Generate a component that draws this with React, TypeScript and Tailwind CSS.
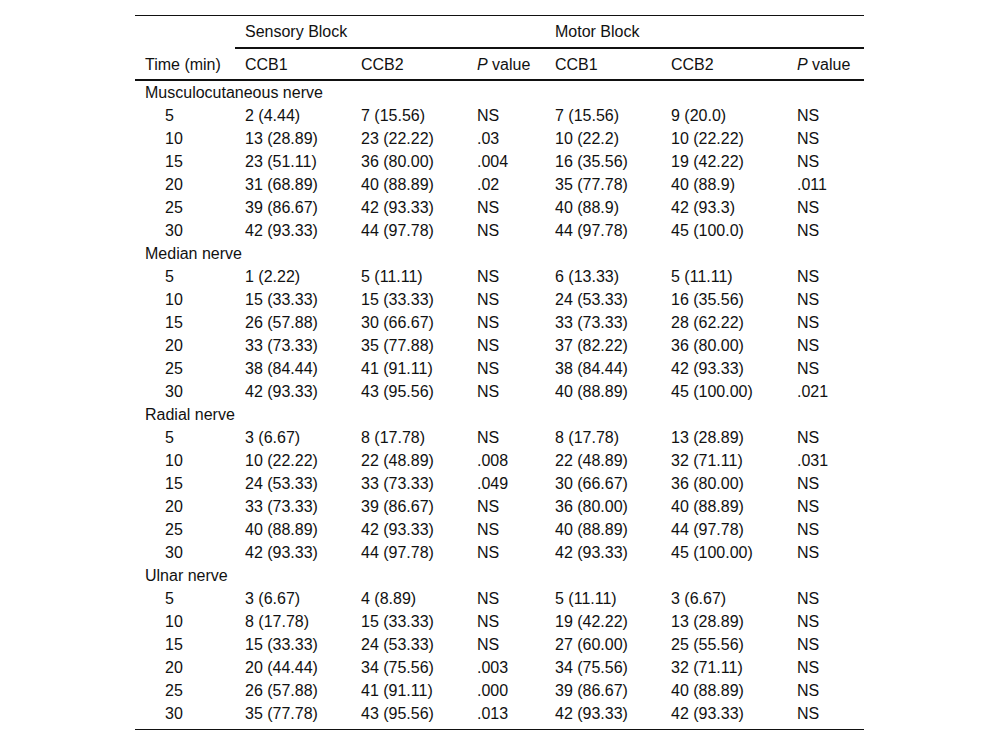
import React from "react";

type Row = [string, string, string, string, string, string, string];
const groups: { name: string; rows: Row[] }[] = [
  {
    name: "Musculocutaneous nerve",
    rows: [
      ["5", "2 (4.44)", "7 (15.56)", "NS", "7 (15.56)", "9 (20.0)", "NS"],
      ["10", "13 (28.89)", "23 (22.22)", ".03", "10 (22.2)", "10 (22.22)", "NS"],
      ["15", "23 (51.11)", "36 (80.00)", ".004", "16 (35.56)", "19 (42.22)", "NS"],
      ["20", "31 (68.89)", "40 (88.89)", ".02", "35 (77.78)", "40 (88.9)", ".011"],
      ["25", "39 (86.67)", "42 (93.33)", "NS", "40 (88.9)", "42 (93.3)", "NS"],
      ["30", "42 (93.33)", "44 (97.78)", "NS", "44 (97.78)", "45 (100.0)", "NS"],
    ],
  },
  {
    name: "Median nerve",
    rows: [
      ["5", "1 (2.22)", "5 (11.11)", "NS", "6 (13.33)", "5 (11.11)", "NS"],
      ["10", "15 (33.33)", "15 (33.33)", "NS", "24 (53.33)", "16 (35.56)", "NS"],
      ["15", "26 (57.88)", "30 (66.67)", "NS", "33 (73.33)", "28 (62.22)", "NS"],
      ["20", "33 (73.33)", "35 (77.88)", "NS", "37 (82.22)", "36 (80.00)", "NS"],
      ["25", "38 (84.44)", "41 (91.11)", "NS", "38 (84.44)", "42 (93.33)", "NS"],
      ["30", "42 (93.33)", "43 (95.56)", "NS", "40 (88.89)", "45 (100.00)", ".021"],
    ],
  },
  {
    name: "Radial nerve",
    rows: [
      ["5", "3 (6.67)", "8 (17.78)", "NS", "8 (17.78)", "13 (28.89)", "NS"],
      ["10", "10 (22.22)", "22 (48.89)", ".008", "22 (48.89)", "32 (71.11)", ".031"],
      ["15", "24 (53.33)", "33 (73.33)", ".049", "30 (66.67)", "36 (80.00)", "NS"],
      ["20", "33 (73.33)", "39 (86.67)", "NS", "36 (80.00)", "40 (88.89)", "NS"],
      ["25", "40 (88.89)", "42 (93.33)", "NS", "40 (88.89)", "44 (97.78)", "NS"],
      ["30", "42 (93.33)", "44 (97.78)", "NS", "42 (93.33)", "45 (100.00)", "NS"],
    ],
  },
  {
    name: "Ulnar nerve",
    rows: [
      ["5", "3 (6.67)", "4 (8.89)", "NS", "5 (11.11)", "3 (6.67)", "NS"],
      ["10", "8 (17.78)", "15 (33.33)", "NS", "19 (42.22)", "13 (28.89)", "NS"],
      ["15", "15 (33.33)", "24 (53.33)", "NS", "27 (60.00)", "25 (55.56)", "NS"],
      ["20", "20 (44.44)", "34 (75.56)", ".003", "34 (75.56)", "32 (71.11)", "NS"],
      ["25", "26 (57.88)", "41 (91.11)", ".000", "39 (86.67)", "40 (88.89)", "NS"],
      ["30", "35 (77.78)", "43 (95.56)", ".013", "42 (93.33)", "42 (93.33)", "NS"],
    ],
  },
];

const PVal = () => (
  <>
    <span className="italic">P</span> value
  </>
);

export default function App() {
  return (
    <div
      className="w-[1000px] h-[747px] bg-white text-[#111] text-[16px] leading-[23px] pt-[15px]"
      style={{ fontFamily: '"Liberation Sans", Arial, sans-serif' }}
    >
      <table className="ml-[135px] w-[729px] border-collapse table-fixed">
        <colgroup>
          <col className="w-[100px]" />
          <col className="w-[116px]" />
          <col className="w-[116px]" />
          <col className="w-[78px]" />
          <col className="w-[116px]" />
          <col className="w-[126px]" />
          <col className="w-[77px]" />
        </colgroup>
        <thead>
          <tr className="h-[32px] border-t border-[#111]">
            <th className="font-normal text-left pl-[10px]"></th>
            <th colSpan={3} className="font-normal text-left pl-[10px] border-b-2 border-[#111]">
              Sensory Block
            </th>
            <th colSpan={3} className="font-normal text-left pl-[10px] border-b-2 border-[#111]">
              Motor Block
            </th>
          </tr>
          <tr className="h-[32px] border-b-2 border-[#111]">
            <th className="font-normal text-left pl-[10px] pt-[2px] whitespace-nowrap">Time (min)</th>
            <th className="font-normal text-left pl-[10px] pt-[2px]">CCB1</th>
            <th className="font-normal text-left pl-[10px] pt-[2px]">CCB2</th>
            <th className="font-normal text-left pl-[10px] pt-[2px] whitespace-nowrap"><PVal /></th>
            <th className="font-normal text-left pl-[10px] pt-[2px]">CCB1</th>
            <th className="font-normal text-left pl-[10px] pt-[2px]">CCB2</th>
            <th className="font-normal text-left pl-[10px] pt-[2px] whitespace-nowrap"><PVal /></th>
          </tr>
        </thead>
        <tbody>
          <tr className="h-[1px]">
            <td colSpan={7} className="p-0 leading-[1px]"></td>
          </tr>
          {groups.map((g) => (
            <React.Fragment key={g.name}>
              <tr className="h-[23px]">
                <td colSpan={7} className="pl-[10px] whitespace-nowrap">{g.name}</td>
              </tr>
              {g.rows.map((r, i) => (
                <tr key={i} className="h-[23px]">
                  {r.map((c, j) => (
                    <td key={j} className={j === 0 ? "pl-[30px]" : "pl-[10px] whitespace-nowrap"}>
                      {c}
                    </td>
                  ))}
                </tr>
              ))}
            </React.Fragment>
          ))}
          <tr className="h-[5px] border-b border-[#111]">
            <td colSpan={7} className="p-0 leading-[1px]"></td>
          </tr>
        </tbody>
      </table>
    </div>
  );
}
